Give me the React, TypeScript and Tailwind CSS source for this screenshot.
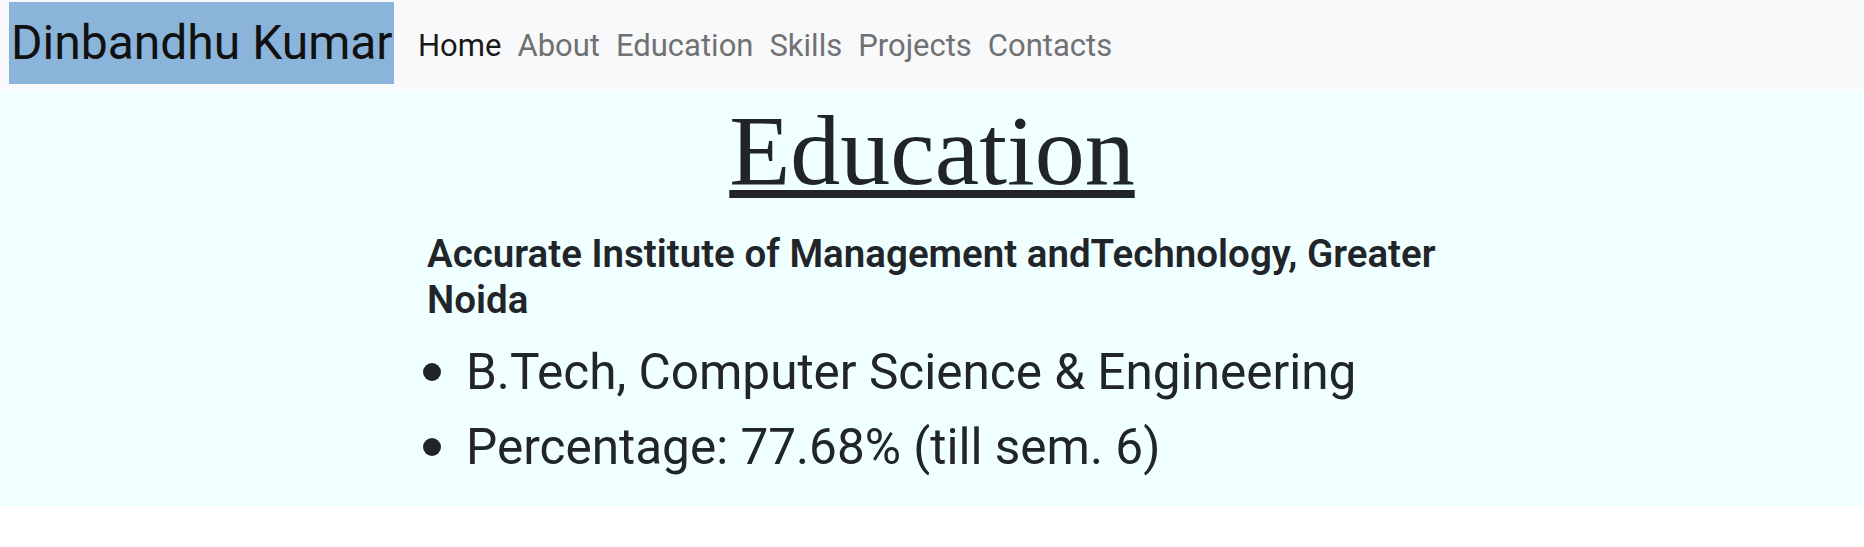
import React from "react";

const links = ["Home", "About", "Education", "Skills", "Projects", "Contacts"];

export default function App() {
  return (
    <div className="w-full bg-white text-[#212529]" style={{ fontFamily: "Roboto, 'Noto Sans', sans-serif" }}>
      <nav className="h-[91px] bg-[#f8f9fa] flex items-start pl-[9px]">
        <a className="mt-[2px] h-[82px] w-[385px] bg-[#8ab4d9] flex items-center pl-[2px] text-[48px] text-[#111] whitespace-nowrap overflow-hidden">
          Dinbandhu Kumar
        </a>
        <ul className="flex ml-[16px] h-[91px] items-center pt-[2px]">
          {links.map((l, i) => (
            <li key={l} className={`px-[8px] text-[31px] ${i === 0 ? "text-[#191919]" : "text-[#707172]"}`}>
              {l}
            </li>
          ))}
        </ul>
      </nav>
      <section className="bg-[#f0ffff] pb-[22px]">
        <h1
          className="text-center text-[100px] leading-[120px] underline decoration-[8px] underline-offset-[6px]"
          style={{ fontFamily: "'Liberation Serif', 'Times New Roman', serif" }}
        >
          Education
        </h1>
        <div className="w-[1010px] mx-auto mt-[20px]">
          <h2 className="mr-[-12px] text-[38.5px] font-semibold leading-[1.2]">
            Accurate Institute of Management andTechnology, Greater Noida
          </h2>
          <ul className="mt-[11px]">
            {["B.Tech, Computer Science & Engineering", "Percentage: 77.68% (till sem. 6)"].map((t) => (
              <li key={t} className="flex items-center h-[75px] text-[49.5px]">
                <span className="ml-[-4px] mr-[25px] w-[18px] h-[18px] rounded-full bg-[#212529] shrink-0" />
                <span>{t}</span>
              </li>
            ))}
          </ul>
        </div>
      </section>
    </div>
  );
}
